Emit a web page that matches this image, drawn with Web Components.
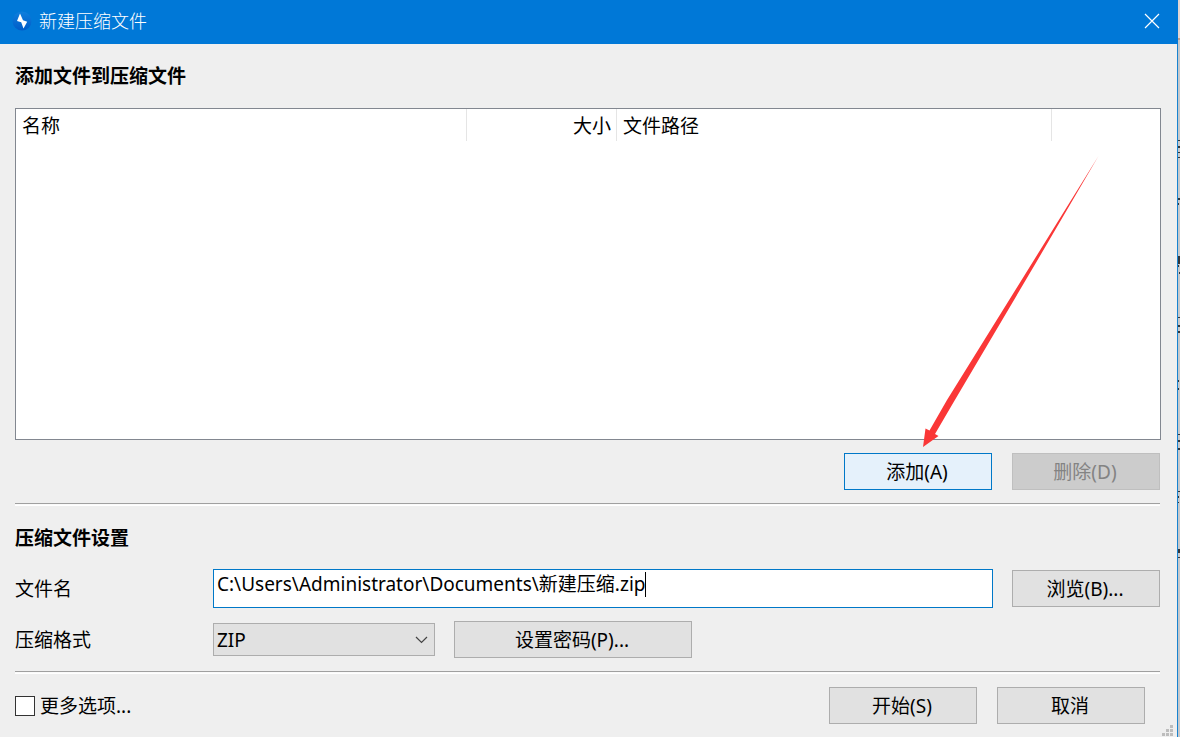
<!DOCTYPE html>
<html lang="zh-CN">
<head>
<meta charset="utf-8">
<title>新建压缩文件</title>
<style>
  html, body { height: 100%; margin: 0; }
  body {
    display: flex;
    overflow: hidden;
    font: 19px/24px "Noto Sans", "Noto Sans CJK SC", sans-serif;
    color: #000;
    background: #c6c8cb;
    --accent: #0078d7;
    --face: #efefef;
  }
</style>
</head>
<body>
<archive-dialog>
  <title-bar slot="title">新建压缩文件</title-bar>
  <section-title slot="files">添加文件到压缩文件</section-title>
  <file-list slot="files"></file-list>
  <button-row slot="files">
    <push-button variant="active">添加(A)</push-button>
    <push-button disabled>删除(D)</push-button>
  </button-row>
  <etched-line slot="settings"></etched-line>
  <section-title slot="settings" compact>压缩文件设置</section-title>
  <path-field slot="settings" label="文件名" value="C:\Users\Administrator\Documents\新建压缩.zip">
    <push-button>浏览(B)...</push-button>
  </path-field>
  <format-field slot="settings" label="压缩格式">
    <push-button variant="wide">设置密码(P)...</push-button>
  </format-field>
  <etched-line slot="footer"></etched-line>
  <footer-bar slot="footer">
    <option-check slot="option" label="更多选项..."></option-check>
    <push-button>开始(S)</push-button>
    <push-button>取消</push-button>
  </footer-bar>
</archive-dialog>
<desktop-edge></desktop-edge>

<script>
function define(name, html, setup) {
  const template = document.createElement('template');
  template.innerHTML = '<style>*{box-sizing:border-box}:host{box-sizing:border-box}</style>' + html;
  customElements.define(name, class extends HTMLElement {
    constructor() {
      super();
      this.attachShadow({ mode: 'open' }).append(template.content.cloneNode(true));
    }
    connectedCallback() { if (setup) setup(this, this.shadowRoot); }
  });
}

define('archive-dialog', `
<style>
  :host { position: relative; flex: 1; min-width: 0; min-height: 100vh; display: flex; flex-direction: column;
    background: var(--face); border-right: 1px solid #1883d0; }
  main { flex: 1; min-height: 0; display: flex; flex-direction: column; padding: 0 16px 13px 15px; }
  .files { flex: 1; min-height: 0; display: flex; flex-direction: column; padding-bottom: 13px; }
  .grip { position: absolute; right: 3px; bottom: 0; width: 12px; height: 12px; }
  .arrow { position: absolute; right: 76px; top: 154px; width: 182px; height: 296px; pointer-events: none; }
</style>
<slot name="title"></slot>
<main>
  <div class="files"><slot name="files"></slot></div>
  <div><slot name="settings"></slot></div>
  <div><slot name="footer"></slot></div>
</main>
<svg class="arrow" viewBox="0 0 182 296" aria-hidden="true">
  <path d="M179.500 2 L115 106 L28 246 L10.500 276.500 L6.500 274.500 L4 293 L19.500 282 L16 280 L35 247.500 L118 107 Z" fill="#fa3737"/>
</svg>
<svg class="grip" viewBox="0 0 12 12" fill="#bdbdbd" aria-hidden="true">
  <path d="M8 0h3v3h-3zM4 4h3v3h-3zM8 4h3v3h-3zM0 8h3v3h-3zM4 8h3v3h-3zM8 8h3v3h-3z"/>
</svg>`);

define('title-bar', `
<style>
  :host { display: flex; align-items: center; height: 44px; padding: 0 18px 2px 12px; color: #fff;
    background: var(--accent); font-size: 18px; margin-right: -1px; }
  .logo { width: 20px; height: 20px; margin-right: 7px; }
  h1 { flex: 1; margin: 0; font: inherit; font-weight: 300; }
  button { width: 16px; height: 16px; padding: 0; border: 0; background: none; color: inherit; }
  button svg { display: block; }
</style>
<svg class="logo" viewBox="0 0 20 20" aria-hidden="true">
  <defs><linearGradient id="g" x2="0" y2="1"><stop stop-color="#0f7fdd"/><stop offset="1" stop-color="#005cc8"/></linearGradient></defs>
  <circle cx="10" cy="10" r="9.5" fill="url(#g)"/>
  <path d="M8 2.500 L5 10 L9.200 11.200 L11.500 17.500 L15.200 10.800 L11 9.300 Z" fill="#fff"/>
</svg>
<h1><slot></slot></h1>
<button type="button" aria-label="关闭"><svg width="16" height="16" viewBox="0 0 16 16" fill="none" stroke="currentColor" stroke-width="1.200"><path d="M1 1l14 14M15 1L1 15"/></svg></button>`);

define('section-title', `
<style>
  :host { display: block; padding: 20px 0; }
  :host([compact]) { padding-bottom: 19px; }
  h2 { margin: 0; font: inherit; font-weight: 700; }
</style>
<h2><slot></slot></h2>`);

define('file-list', `
<style>
  :host { display: block; flex: 1; min-height: 120px; background: #fff; border: 1px solid #828790; }
  table { width: 100%; table-layout: fixed; border-collapse: separate; border-spacing: 0; }
  th { height: 32px; padding: 2px 5px 0 6px; border-right: 1px solid #e5e5e5; font-weight: 400; text-align: left; }
  th.size { text-align: right; }
  td { border: 0; padding: 0; }
</style>
<table>
  <colgroup><col style="width:451px"><col style="width:150px"><col style="width:435px"><col></colgroup>
  <thead><tr><th scope="col">名称</th><th scope="col" class="size">大小</th><th scope="col">文件路径</th><td></td></tr></thead>
</table>`);

define('button-row', `
<style>:host { display: flex; justify-content: flex-end; gap: 20px; padding: 13px 1px 0 0; }</style>
<slot></slot>`);

define('push-button', `
<style>
  :host { display: block; width: 148px; flex: none; }
  :host([variant="wide"]) { width: 238px; }
  button { display: block; width: 100%; height: 37px; padding: 0 2px 0 0; border: 1px solid #adadad;
    background: #e1e1e1; color: inherit; font: inherit; text-align: center; }
  :host([variant="active"]) button { border-color: #0078c8; background: #e5f1fb; }
  button:disabled { border-color: #bfbfbf; background: #ccc; color: #838383; }
</style>
<button type="button"><slot></slot></button>`, (host, root) => {
  root.querySelector('button').disabled = host.hasAttribute('disabled');
});

define('etched-line', `
<style>:host { display: block; height: 3px; margin-right: 1px; border-top: 1px solid #a0a0a0; border-bottom: 1px solid #fff; background: #fafafa; }</style>`);

define('path-field', `
<style>
  :host { display: flex; align-items: center; margin-right: 1px; }
  label { width: 198px; flex: none; }
  .box { flex: 1; min-width: 0; display: flex; height: 39px; margin-right: 19px; padding: 2px 0 0 3px;
    overflow: hidden; border: 1px solid #0078c8; background: #fff; }
  input { field-sizing: content; height: 24px; padding: 0; border: 0; outline: 0; background: none; color: inherit; font: inherit; }
  i { width: 1px; height: 25px; background: #000; }
</style>
<label for="path"></label>
<div class="box"><input id="path" type="text" spellcheck="false"><i></i></div>
<slot></slot>`, (host, root) => {
  root.querySelector('label').textContent = host.getAttribute('label');
  root.querySelector('input').value = host.getAttribute('value');
});

define('format-field', `
<style>
  :host { display: flex; align-items: center; padding: 13px 0; }
  label { width: 198px; flex: none; }
  .pick { position: relative; width: 222px; margin-right: 19px; }
  select { appearance: none; display: block; width: 100%; height: 33px; padding: 0 28px 0 3px; border: 1px solid #adadad;
    border-radius: 0; background: #e1e1e1; color: inherit; font: inherit; }
  svg { position: absolute; right: 7px; top: 13px; pointer-events: none; }
</style>
<label for="format"></label>
<div class="pick"><select id="format"><option>ZIP</option></select>
<svg width="13" height="8" viewBox="0 0 13 8" fill="none" stroke="#444" stroke-width="1.200" aria-hidden="true"><path d="M1 1l5.500 5.500L12 1"/></svg></div>
<slot></slot>`, (host, root) => {
  root.querySelector('label').textContent = host.getAttribute('label');
});

define('footer-bar', `
<style>
  :host { display: flex; align-items: center; gap: 20px; padding: 13px 16px 0 0; }
  .left { flex: 1; }
</style>
<div class="left"><slot name="option"></slot></div><slot></slot>`);

define('option-check', `
<style>
  :host { display: flex; align-items: center; gap: 5px; }
  input { appearance: none; width: 20px; height: 20px; margin: 0; border: 1px solid #333; background: #fff; }
</style>
<input id="more" type="checkbox"><label for="more"></label>`, (host, root) => {
  root.querySelector('label').textContent = host.getAttribute('label');
});

define('desktop-edge', `
<style>:host { display: block; flex: none; width: 2px; } svg { display: block; }</style>
<svg width="2" height="737" viewBox="0 0 2 737" aria-hidden="true">
  <path d="M0 0h2v38h-2z" fill="#e3d5d2"/><path d="M0 38h2v2h-2z" fill="#c49b86"/>
  <path fill="#34373b" d="M0 140h2v1h-2zM0 146h2v2h-2zM0 152h2v1h-2zM0 157h2v1h-2zM0 198h2v2h-2zM0 203h1v2h-1zM0 256h2v8h-2zM0 265h1v2h-1zM1 272h1v2h-1zM0 317h2v1h-2zM0 325h2v2h-2zM0 331h2v2h-2zM0 380h1v2h-1zM0 388h1v2h-1zM0 434h2v1h-2zM0 440h2v2h-2zM0 448h2v2h-2zM0 491h2v1h-2zM0 496h1v2h-1zM0 502h1v1h-1zM0 549h2v4h-2zM0 557h2v1h-2z"/>
</svg>`);
</script>
</body>
</html>
